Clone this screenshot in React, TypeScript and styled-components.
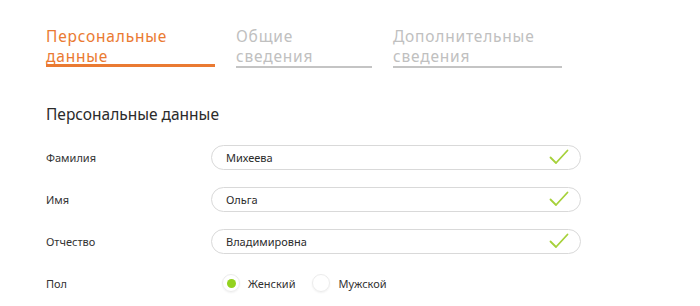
import React, { ReactElement } from 'react';
import styled, { createGlobalStyle } from 'styled-components';

type Step = { lines: [string, string]; active?: boolean; width: number };
type Field = { label: string; value: string };

const steps: Step[] = [
  { lines: ['Персональные', 'данные'], active: true, width: 169 },
  { lines: ['Общие', 'сведения'], width: 136 },
  { lines: ['Дополнительные', 'сведения'], width: 169 },
];

const fields: Field[] = [
  { label: 'Фамилия', value: 'Михеева' },
  { label: 'Имя', value: 'Ольга' },
  { label: 'Отчество', value: 'Владимировна' },
];

function Check(): ReactElement {
  return (
    <CheckIcon width="20" height="16" viewBox="0 0 20 16" fill="none">
      <path d="M1.5 8.5 L7 14 L18.5 1.5" stroke="#a6d13a" strokeWidth="1.8" strokeLinecap="round" strokeLinejoin="round" />
    </CheckIcon>
  );
}

function App(): ReactElement {
  return (
    <Page>
      <GlobalStyle />
      <Steps>
        {steps.map((step) => (
          <StepTab key={step.lines[0]} $active={step.active} $width={step.width}>
            {step.lines[0]}
            <br />
            {step.lines[1]}
          </StepTab>
        ))}
      </Steps>

      <Heading>Персональные данные</Heading>

      <Form>
        {fields.map((field) => (
          <Row key={field.label}>
            <Label>{field.label}</Label>
            <InputBox>
              <InputText>{field.value}</InputText>
              <Check />
            </InputBox>
          </Row>
        ))}
        <Row>
          <Label>Пол</Label>
          <Radios>
            <RadioOption>
              <RadioCircle $checked />
              Женский
            </RadioOption>
            <RadioOption>
              <RadioCircle />
              Мужской
            </RadioOption>
          </Radios>
        </Row>
      </Form>
    </Page>
  );
}

const GlobalStyle = createGlobalStyle`
  body {
    margin: 0;
    background: #ffffff;
    font-family: "Noto Sans", "Open Sans", sans-serif;
    color: #333333;
  }
`;

const Page = styled.div`
  padding: 26px 46px 0;
  height: 306px;
  box-sizing: border-box;
  overflow: hidden;
`;

const Steps = styled.div`
  display: flex;
  gap: 21px;
`;

const StepTab = styled.div<{ $active?: boolean; $width: number }>`
  width: ${(p) => p.$width}px;
  box-sizing: content-box;
  font-size: 15.5px;
  letter-spacing: 0.8px;
  line-height: 20px;
  white-space: nowrap;
  color: ${(p) => (p.$active ? '#ea7a32' : '#c0c0c0')};
  border-bottom: ${(p) => (p.$active ? '3px solid #ea7a32' : '2px solid #c4c4c4')};
  height: ${(p) => (p.$active ? 38 : 40)}px;
`;

const Heading = styled.h2`
  margin: 35px 0 0;
  font-size: 15.5px;
  font-weight: 400;
  line-height: 22px;
  color: #2b2b2b;
`;

const Form = styled.div`
  margin-top: 11px;
  display: flex;
  flex-direction: column;
`;

const Row = styled.div`
  display: flex;
  align-items: center;
  height: 42px;
`;

const Label = styled.div`
  width: 165px;
  font-size: 11px;
  color: #333333;
`;

const InputBox = styled.div`
  width: 370px;
  height: 25px;
  box-sizing: border-box;
  border: 1px solid #d9d9d9;
  border-radius: 13px;
  display: flex;
  align-items: center;
  justify-content: space-between;
  padding: 0 11px 0 14px;
`;

const InputText = styled.span`
  font-size: 11px;
  color: #2b2b2b;
`;

const CheckIcon = styled.svg`
  display: block;
`;

const Radios = styled.div`
  display: flex;
  gap: 17px;
  margin-left: 11px;
`;

const RadioOption = styled.label`
  display: flex;
  align-items: center;
  gap: 8px;
  font-size: 11px;
  color: #333333;
`;

const RadioCircle = styled.span<{ $checked?: boolean }>`
  width: 18px;
  height: 18px;
  border-radius: 50%;
  box-sizing: border-box;
  border: 1px solid #ececec;
  box-shadow: 0 1px 2px rgba(0, 0, 0, 0.06);
  display: flex;
  align-items: center;
  justify-content: center;

  &::after {
    content: '';
    display: ${(p) => (p.$checked ? 'block' : 'none')};
    width: 9px;
    height: 9px;
    border-radius: 50%;
    background: #93d21e;
  }
`;

export default App;
